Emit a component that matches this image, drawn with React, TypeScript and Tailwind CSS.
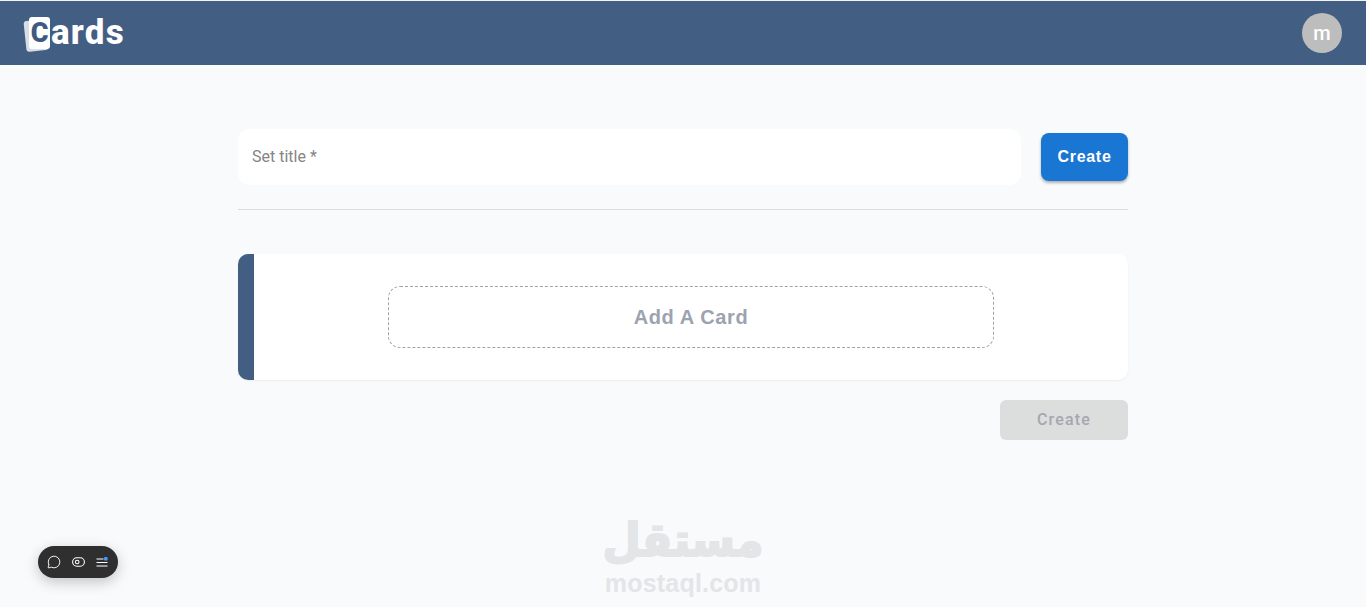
import { MessageCircle } from "lucide-react";

function Logo() {
  return (
    <div className="flex items-center">
      <div className="relative w-[26px] h-[35px] mt-[3px] shrink-0">
        <div className="absolute left-[1px] top-[3px] w-[22px] h-[31px] rounded-[3px] bg-[#d8dee8] -rotate-6" />
        <div className="absolute left-[5px] top-0 w-[21px] h-[32px] rounded-[3px] bg-white flex items-center justify-center">
          <span className="font-['Roboto',sans-serif] font-black text-[27px] leading-none text-[#3f5a80]">C</span>
        </div>
      </div>
      <span className="font-['Roboto',sans-serif] font-extrabold text-[35px] leading-none text-white tracking-[1.2px] -mt-[2px] ml-[1px]">
        ards
      </span>
    </div>
  );
}

function Widget() {
  return (
    <div className="absolute left-[38px] top-[546px] w-[80px] h-[32px] rounded-full bg-[#2f2f2f] flex items-center pl-[9px] gap-[11px] shadow-[0_4px_14px_rgba(0,0,0,0.22)]">
      <MessageCircle className="w-[14px] h-[14px] text-white" strokeWidth={1.6} />
      <svg width="13" height="10" viewBox="0 0 13 10" fill="none" stroke="white" strokeWidth="1.1">
        <rect x="0.6" y="0.8" width="11.8" height="8.4" rx="4.2" />
        <circle cx="5.2" cy="5" r="1.8" />
      </svg>
      <svg width="12" height="11" viewBox="0 0 12 11" fill="none">
        <path d="M0.5 2h7M0.5 5.5h11M0.5 9h11" stroke="white" strokeWidth="1.2" />
        <circle cx="9.8" cy="1.8" r="2" fill="#3f9cff" />
      </svg>
    </div>
  );
}

function Watermark() {
  return (
    <div className="absolute left-[583px] top-[516px] w-[200px] flex flex-col items-center select-none text-[#e3e5e7]">
      <span className="font-['DejaVu_Sans',sans-serif] font-bold text-[44px] leading-[52px] h-[52px] origin-bottom scale-y-[1.05] [-webkit-text-stroke:2px_#e3e5e7]" dir="rtl">
        مستقل
      </span>
      <span className="font-['Liberation_Sans',sans-serif] font-bold text-[25px] tracking-[0.2px] leading-[24px] mt-[3px]">
        mostaql.com
      </span>
    </div>
  );
}

export default function App() {
  return (
    <div className="relative min-h-[607px] bg-[#f9fafc] font-['Roboto',sans-serif] overflow-hidden">
      <div className="h-[1px] bg-[#f2f4f7]" />
      <header className="h-[64px] bg-[#435e83] flex items-center justify-between pl-[24px] pr-[24px]">
        <Logo />
        <div className="w-[40px] h-[40px] rounded-full bg-[#bdbdbd] flex items-center justify-center text-white text-[20px] font-medium">
          m
        </div>
      </header>

      <main className="w-[890px] mx-auto pt-[64px]">
        <div className="flex items-center gap-[20px]">
          <div className="flex-1 h-[56px] rounded-[12px] bg-white flex items-center px-[14px] text-[16px] text-[#858585]">
            Set title *
          </div>
          <button className="w-[87px] h-[48px] rounded-[8px] bg-[#1976d2] text-white font-['Liberation_Sans',sans-serif] font-bold text-[16px] tracking-[0.7px] shadow-[0_2px_3px_rgba(0,0,0,0.3)]">
            Create
          </button>
        </div>

        <div className="mt-[24px] h-px bg-[#d9dbde]" />

        <div className="mt-[44px] h-[126px] rounded-[10px] bg-white overflow-hidden flex shadow-[0_1px_2px_rgba(0,0,0,0.06)]">
          <div className="w-[16px] bg-[#435e83]" />
          <div className="flex-1 flex items-center pl-[134px]">
            <div className="w-[606px] h-[62px] rounded-[12px] border border-dashed border-[#9ca3af] flex items-center justify-center font-['Liberation_Sans',sans-serif] font-bold text-[20px] tracking-[0.6px] text-[#9ca3af]">
              Add A Card
            </div>
          </div>
        </div>

        <div className="mt-[20px] flex justify-end">
          <button className="w-[128px] h-[40px] rounded-[6px] bg-[#dcdddd] text-[#a3a8b0] font-medium text-[16px] tracking-[1.2px]">
            Create
          </button>
        </div>
      </main>

      <Watermark />
      <Widget />
    </div>
  );
}
